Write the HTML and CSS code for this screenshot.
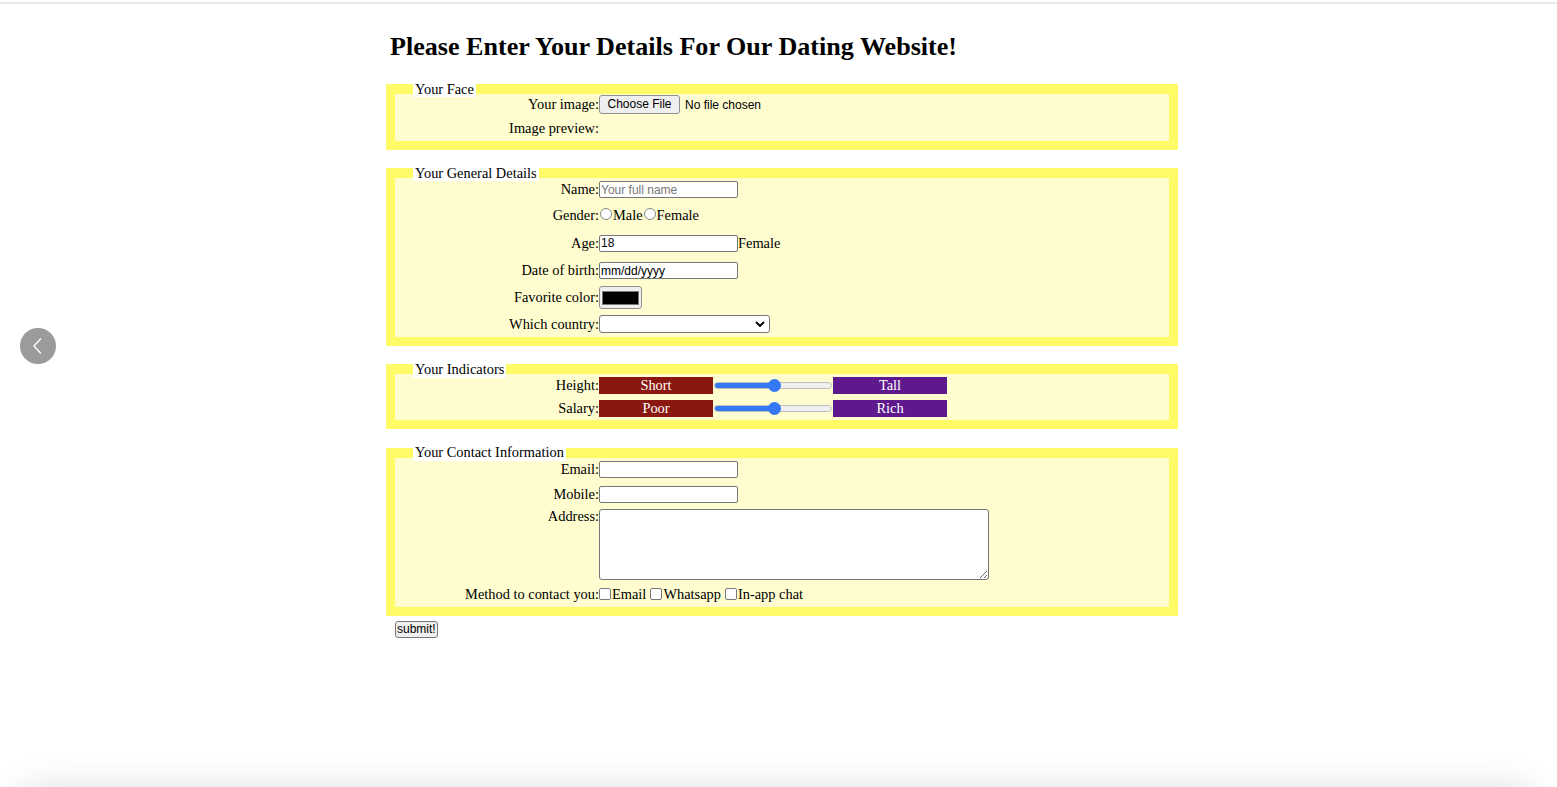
FILE: index.html
```html
<!DOCTYPE html>
<html lang="en">
<head>
<meta charset="utf-8">
<title>Dating Website Details</title>
<link rel="stylesheet" href="styles.css">
</head>
<body>
<div class="topbar"></div>
<button class="nav-prev" type="button" aria-label="Previous">
  <svg width="36" height="36" viewBox="0 0 36 36"><path d="M20.5 11 L14 18 L20.5 25" fill="none" stroke="#fff" stroke-width="1.4" stroke-linecap="round" stroke-linejoin="round"/></svg>
</button>
<main class="page">
  <h1 class="title">Please Enter Your Details For Our Dating Website!</h1>
  <form class="form">
    <fieldset class="box">
      <legend>Your Face</legend>
      <div class="row first h22"><label class="lbl">Your image:</label><div class="fld"><span class="filebtn">Choose File</span><span class="filetxt">No file chosen</span></div></div>
      <div class="row h25"><label class="lbl">Image preview:</label><div class="fld"></div></div>
    </fieldset>

    <fieldset class="box">
      <legend>Your General Details</legend>
      <div class="row first h23"><label class="lbl">Name:</label><div class="fld"><input class="txt" type="text" placeholder="Your full name"></div></div>
      <div class="row h28"><label class="lbl">Gender:</label><div class="fld"><input class="radio" type="radio" name="g">Male<input class="radio" type="radio" name="g">Female</div></div>
      <div class="row h28"><label class="lbl">Age:</label><div class="fld"><input class="txt" type="text" value="18">Female</div></div>
      <div class="row h27"><label class="lbl">Date of birth:</label><div class="fld"><input class="txt" type="text" value="mm/dd/yyyy"></div></div>
      <div class="row h27"><label class="lbl">Favorite color:</label><div class="fld"><span class="colorbtn"><span class="swatch"></span></span></div></div>
      <div class="row h26"><label class="lbl">Which country:</label><div class="fld"><span class="selwrap"><select class="sel"><option></option></select><svg class="chev" width="10" height="7" viewBox="0 0 10 7"><path d="M1.5 1.5 L5 5 L8.5 1.5" fill="none" stroke="#000" stroke-width="1.8" stroke-linecap="round" stroke-linejoin="round"/></svg></span></div></div>
    </fieldset>

    <fieldset class="box">
      <legend>Your Indicators</legend>
      <div class="row first h23"><label class="lbl">Height:</label><div class="fld"><span class="tag low">Short</span><input class="range" type="range" min="0" max="100" value="51"><span class="tag high">Tall</span></div></div>
      <div class="row h23"><label class="lbl">Salary:</label><div class="fld"><span class="tag low">Poor</span><input class="range" type="range" min="0" max="100" value="51"><span class="tag high">Rich</span></div></div>
    </fieldset>

    <fieldset class="box last">
      <legend>Your Contact Information</legend>
      <div class="row first h24"><label class="lbl">Email:</label><div class="fld"><input class="txt" type="text"></div></div>
      <div class="row h25"><label class="lbl">Mobile:</label><div class="fld"><input class="txt" type="text"></div></div>
      <div class="row top h76"><label class="lbl">Address:</label><div class="fld"><textarea class="area"></textarea></div></div>
      <div class="row h24"><label class="lbl">Method to contact you:</label><div class="fld"><input class="check" type="checkbox">Email<input class="check sp" type="checkbox">Whatsapp<input class="check sp" type="checkbox">In-app chat</div></div>
    </fieldset>
    <button class="submit" type="button">submit!</button>
  </form>
</main>
<div class="dock"></div>
</body>
</html>
```

FILE: styles.css
```css
* { box-sizing: border-box; }
html, body { margin: 0; padding: 0; background: #fff; }
body {
  font-family: "Liberation Serif", "Times New Roman", serif;
  font-size: 14.4px;
  color: #000;
  overflow: hidden;
}
.topbar { height: 2px; margin-top: 2px; background: #e8e8e8; }

.nav-prev {
  position: fixed;
  left: 20px;
  top: 328px;
  width: 36px;
  height: 36px;
  padding: 0;
  border: none;
  border-radius: 50%;
  background: #9b9b9b;
  display: flex;
  align-items: center;
  justify-content: center;
}
.nav-prev svg { display: block; }

.dock {
  position: fixed;
  left: 18px;
  right: 18px;
  bottom: -60px;
  height: 60px;
  border-radius: 24px;
  background: #fff;
  box-shadow: 0 0 34px rgba(0, 0, 0, 0.13);
}

.page { width: 792px; margin-left: 386px; }
.title {
  font-size: 26.1px;
  font-weight: bold;
  line-height: 29.6px;
  margin: 27.5px 0 19.5px 4px;
}

.box {
  margin: 0 0 15px 0;
  padding: 0;
  min-width: 0;
  width: 100%;
  border-style: solid;
  border-color: #fffb66;
  border-width: 10px 9px 9px 9px;
  background: #fffdd0;
}
.box.last { margin-bottom: 5px; }
.box legend {
  margin-left: 18px;
  padding: 0 2px;
  background: #fff;
  line-height: 16.5px;
}

.row { display: flex; align-items: center; white-space: nowrap; }
.row.first { margin-top: -3.25px; }
.row.top { align-items: flex-start; }
.h22 { height: 22px; }
.h23 { height: 23px; }
.h24 { height: 24px; }
.h25 { height: 25px; }
.h26 { height: 26px; }
.h27 { height: 27px; }
.h28 { height: 28px; }
.h76 { height: 76px; }
.lbl { width: 204px; flex: none; text-align: right; }
.row.top .lbl { margin-top: 1px; }
.fld { display: flex; align-items: center; }
.row.top .fld { margin-top: 2px; }

.filebtn {
  display: inline-block;
  width: 81px;
  height: 19px;
  text-align: center;
  font: 12px "Liberation Sans", Arial, sans-serif;
  line-height: 17px;
  background: #efefef;
  border: 1px solid #8f8f8f;
  border-radius: 3px;
}
.filetxt { font: 12px "Liberation Sans", Arial, sans-serif; margin-left: 5px; }

.txt {
  width: 139px;
  height: 17px;
  margin: 0;
  padding: 0 1px;
  border: 1px solid #767676;
  border-radius: 2px;
  background: #fff;
  font: 12px "Liberation Sans", Arial, sans-serif;
  color: #000;
}
.txt::placeholder { color: #777; }

.radio {
  -webkit-appearance: none;
  appearance: none;
  width: 12px;
  height: 12px;
  margin: 0 1px 2px 1px;
  border: 1px solid #8a8a8a;
  border-radius: 50%;
  background: #fff;
}
.check {
  -webkit-appearance: none;
  appearance: none;
  width: 12px;
  height: 12px;
  margin: 0 1px 1px 0;
  border: 1px solid #7a7a7a;
  border-radius: 2px;
  background: #fff;
}
.check.sp { margin-left: 4px; }

.colorbtn {
  display: inline-flex;
  align-items: center;
  justify-content: center;
  width: 43px;
  height: 23px;
  background: #efefef;
  border: 1px solid #8f8f8f;
  border-radius: 3px;
}
.swatch { display: block; width: 37px; height: 14px; background: #000; border: 1px solid #777; }

.selwrap { position: relative; display: inline-block; }
.sel {
  -webkit-appearance: none;
  appearance: none;
  display: block;
  width: 171px;
  height: 18px;
  margin: 0;
  border: 1px solid #767676;
  border-radius: 3px;
  background: #fff;
  font: 12px "Liberation Sans", Arial, sans-serif;
}
.chev { position: absolute; right: 5px; top: 6px; }

.tag {
  display: inline-block;
  width: 114px;
  height: 17px;
  line-height: 17px;
  text-align: center;
  color: #fff;
}
.tag.low { background: #8a1811; }
.tag.high { background: #5e1a8d; }

.range {
  -webkit-appearance: none;
  appearance: none;
  width: 118px;
  height: 7px;
  margin: 0 1px;
  padding: 0;
  border: 1px solid #bdbdbd;
  border-radius: 4px;
  background: linear-gradient(to right, #3478f6 0, #3478f6 52%, #efefef 52%);
}
.range::-webkit-slider-thumb {
  -webkit-appearance: none;
  appearance: none;
  width: 13px;
  height: 13px;
  border: none;
  border-radius: 50%;
  background: #3478f6;
}

.area {
  display: block;
  width: 390px;
  height: 71px;
  margin: 0;
  border: 1px solid #767676;
  border-radius: 3px;
  background: #fff;
  resize: both;
}

.submit {
  display: block;
  margin: 0 0 0 9px;
  height: 17px;
  padding: 0 1px;
  font: 12px "Liberation Sans", Arial, sans-serif;
  color: #000;
  background: #efefef;
  border: 1px solid #767676;
  border-radius: 3px;
}
```
